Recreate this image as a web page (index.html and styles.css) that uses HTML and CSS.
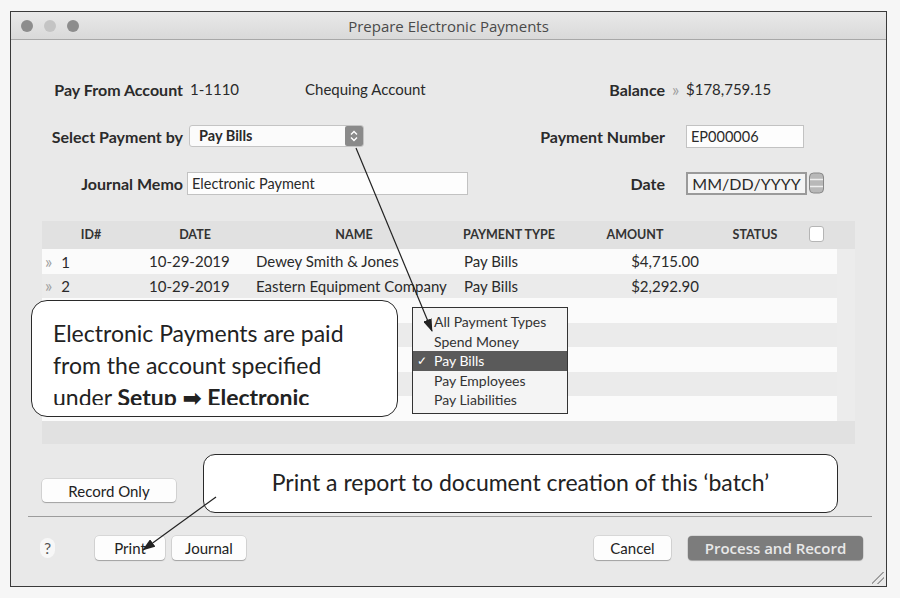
FILE: index.html
```html
<!DOCTYPE html>
<html lang="en">
<head>
    <meta charset="UTF-8">
    <title>Prepare Electronic Payments</title>
    <link rel="stylesheet" href="styles.css">
</head>
<body>
<div class="window">
    <div class="titlebar">
        <div class="lights"><span></span><span class="mid"></span><span></span></div>
        <div class="title">Prepare Electronic Payments</div>
    </div>

    <div class="form">
        <div class="row">
            <div class="lbl">Pay From Account</div>
            <div class="left"><span class="acct">1-1110</span><span>Chequing Account</span></div>
            <div class="lbl">Balance</div>
            <div class="right"><span class="chev">&raquo;</span>$178,759.15</div>
        </div>
        <div class="row">
            <div class="lbl">Select Payment by</div>
            <div class="left">
                <div class="select">Pay Bills
                    <span class="stepper">
                        <svg width="8" height="12" viewBox="0 0 8 12"><path d="M1 4.5 L4 1.5 L7 4.5 M1 7.5 L4 10.5 L7 7.5" fill="none" stroke="#fff" stroke-width="1.4"/></svg>
                    </span>
                </div>
            </div>
            <div class="lbl">Payment Number</div>
            <div class="right"><div class="input num">EP000006</div></div>
        </div>
        <div class="row">
            <div class="lbl">Journal Memo</div>
            <div class="left"><div class="input memo">Electronic Payment</div></div>
            <div class="lbl">Date</div>
            <div class="right">
                <div class="input date-field">MM/DD/YYYY</div>
                <svg class="cal" width="15" height="22" viewBox="0 0 15 22">
                    <rect x="0.5" y="1" width="14" height="20" rx="4" fill="#b8b8b8" stroke="#888"/>
                    <line x1="1" y1="7.5" x2="14" y2="7.5" stroke="#eee" stroke-width="1.5"/>
                    <line x1="1" y1="14.5" x2="14" y2="14.5" stroke="#eee" stroke-width="1.5"/>
                </svg>
            </div>
        </div>
    </div>

    <div class="table">
        <div class="thead">
            <div>ID#</div><div>DATE</div><div>NAME</div><div>PAYMENT TYPE</div><div>AMOUNT</div><div>STATUS</div><div><span class="check"></span></div>
        </div>
        <div class="tbody">
            <div class="rows">
                <div class="tr"><div class="id"><span class="chev">&raquo;</span>1</div><div class="day">10-29-2019</div><div>Dewey Smith &amp; Jones</div><div>Pay Bills</div><div class="amt">$4,715.00</div><div></div><div></div></div>
                <div class="tr"><div class="id"><span class="chev">&raquo;</span>2</div><div class="day">10-29-2019</div><div>Eastern Equipment Company</div><div>Pay Bills</div><div class="amt">$2,292.90</div><div></div><div></div></div>
                <div class="tr"></div>
                <div class="tr"></div>
                <div class="tr"></div>
                <div class="tr"></div>
                <div class="tr"></div>
            </div>
            <div class="scroll"></div>
        </div>
    </div>

    <div class="actions">
        <button class="btn record">Record Only</button>
    </div>
    <div class="sep"></div>
    <div class="footer">
        <span class="help">?</span>
        <button class="btn print">Print</button>
        <button class="btn journal">Journal</button>
        <span class="spacer"></span>
        <button class="btn cancel">Cancel</button>
        <button class="btn process">Process and Record</button>
    </div>

    <div class="grip"></div>

    <!-- callouts laid over the dialog -->
    <div class="callout note-left">
        <div class="note-text">Electronic Payments are paid<br>from the account specified<br>under <b>Setup &#10145; Electronic</b></div>
    </div>
    <div class="menu">
        <div class="item">All Payment Types</div>
        <div class="item">Spend Money</div>
        <div class="item on"><span class="tick">&#10003;</span>Pay Bills</div>
        <div class="item">Pay Employees</div>
        <div class="item">Pay Liabilities</div>
    </div>
    <div class="callout note-print">Print a report to document creation of this &lsquo;batch&rsquo;</div>

    <svg class="arrows" width="900" height="598" viewBox="0 0 900 598">
        <defs>
            <marker id="head" markerWidth="13" markerHeight="9" refX="12" refY="4.5" orient="auto" markerUnits="userSpaceOnUse">
                <path d="M0 0 L13 4.5 L0 9 Z" fill="#222"/>
            </marker>
        </defs>
        <line x1="356" y1="148" x2="432" y2="331" stroke="#222" stroke-width="1.2" marker-end="url(#head)"/>
        <line x1="216" y1="497" x2="143" y2="550" stroke="#222" stroke-width="1.2" marker-end="url(#head)"/>
    </svg>
</div>
</body>
</html>
```

FILE: styles.css
```css
body {
    margin: 0;
    background: #f6f6f6;
    font-family: Lato, "Open Sans", sans-serif;
    color: #2a2a2a;
}
.window {
    position: relative;
    box-sizing: border-box;
    width: 877px;
    height: 576px;
    margin: 11px 0 0 10px;
    border: 1px solid #3a3a3a;
    background: #e9e9e9;
    overflow: hidden;
}
.titlebar {
    position: relative;
    height: 27px;
    border-bottom: 1px solid #a8a8a8;
    background: linear-gradient(#e9e9e9, #d9d9d9);
    display: flex;
    align-items: center;
    justify-content: center;
}
.lights {
    position: absolute;
    left: 10px;
    top: 8px;
    display: flex;
    gap: 11px;
}
.lights span {
    width: 12px;
    height: 12px;
    border-radius: 50%;
    background: #8d8d8d;
}
.lights .mid {
    background: #c4c4c4;
}
.title {
    font-family: "Open Sans", sans-serif;
    font-size: 15px;
    color: #4a4a4a;
}

.form {
    padding-top: 37px;
    display: flex;
    flex-direction: column;
    gap: 23px;
}
.row {
    display: grid;
    grid-template-columns: 176px 283px 195px auto;
    height: 24px;
    align-items: center;
    font-size: 15px;
}
.lbl {
    font-weight: bold;
    font-size: 16px;
    text-align: right;
    padding-right: 4px;
    color: #2b2b2b;
}
.row .lbl:nth-child(3) {
    padding-right: 0;
}
.left {
    display: flex;
    align-items: center;
    height: 24px;
}
.acct {
    width: 115px;
    padding-left: 3px;
}
.right {
    display: flex;
    align-items: center;
    padding-left: 21px;
    height: 24px;
}
.chev {
    color: #a0a0a0;
    font-size: 17px;
}
.right .chev {
    margin-left: -14px;
    width: 14px;
}
.select {
    position: relative;
    box-sizing: border-box;
    width: 175px;
    height: 22px;
    margin-left: 2px;
    padding-left: 9px;
    line-height: 20px;
    background: #fbfbfb;
    border: 1px solid #c4c4c4;
    border-radius: 3px;
    font-weight: bold;
    font-size: 14.5px;
}
.stepper {
    position: absolute;
    right: 0;
    top: 0;
    width: 18px;
    height: 20px;
    background: #8a8a8a;
    border-radius: 2px;
    display: flex;
    align-items: center;
    justify-content: center;
}
.input {
    box-sizing: border-box;
    height: 23px;
    padding-left: 4px;
    line-height: 21px;
    background: #fdfdfd;
    border: 1px solid #c2c2c2;
    font-size: 14.5px;
}
.num {
    width: 118px;
}
.memo {
    width: 281px;
}
.date-field {
    width: 121px;
    border: 2px solid #9a9a9a;
    background: #f4f4f4;
    font-size: 16px;
    line-height: 19px;
    text-align: center;
    padding-left: 0;
}
.cal {
    margin-left: 2px;
}

.table {
    margin: 26px 0 0 31px;
    width: 813px;
    height: 223px;
    background: #e1e1e1;
}
.thead,
.tr {
    display: grid;
    grid-template-columns: 98px 110px 208px 102px 150px 90px 37px;
}
.thead {
    height: 26px;
    grid-template-columns: 98px 110px 208px 102px 150px 90px 55px;
    align-items: center;
    font-size: 12.5px;
    font-weight: bold;
    color: #333;
    text-align: center;
}
.check {
    display: inline-block;
    width: 13px;
    height: 14px;
    margin: 0 23px 0 0;
    background: #fff;
    border: 1px solid #b5b5b5;
    border-radius: 3px;
    vertical-align: middle;
}
.tbody {
    display: flex;
    margin-top: 2px;
}
.rows {
    width: 795px;
}
.scroll {
    flex: 1;
    height: 172px;
    background: #ececec;
}
.tr {
    height: 24.5px;
    align-items: center;
    font-size: 15px;
    background: #fbfbfb;
}
.tr:nth-child(even) {
    background: #ebebeb;
}
.tr .id {
    padding-left: 3px;
}
.tr .id .chev {
    margin-right: 9px;
}
.tr .day {
    padding-left: 9px;
}
.tr .amt {
    text-align: right;
    padding-right: 11px;
}
.tr div:nth-child(3),
.tr div:nth-child(4) {
    padding-left: 6px;
}

.actions {
    padding: 35px 0 0 31px;
}
.btn {
    box-sizing: border-box;
    height: 24px;
    padding: 0;
    background: #fdfdfd;
    border: none;
    border-radius: 4px;
    box-shadow: 0 1px 1px rgba(0, 0, 0, 0.25), 0 0 0 0.5px rgba(0, 0, 0, 0.15);
    font-family: Lato, "Open Sans", sans-serif;
    font-size: 15px;
    color: #222;
}
.record {
    width: 134px;
    height: 23px;
}
.sep {
    margin: 14px 14px 0 17px;
    border-top: 1px solid #9c9c9c;
}
.footer {
    display: flex;
    align-items: center;
    margin-top: 19px;
    padding: 0 23px 0 29px;
}
.help {
    width: 15px;
    height: 20px;
    line-height: 20px;
    text-align: center;
    font-size: 16px;
    color: #555;
    background: #f7f7f7;
    border-radius: 8px;
    margin-right: 40px;
}
.print {
    width: 70px;
}
.journal {
    width: 74px;
    margin-left: 7px;
}
.spacer {
    flex: 1;
}
.cancel {
    width: 77px;
}
.process {
    width: 175px;
    margin-left: 17px;
    background: #7c7c7c;
    color: #e8e8e8;
    font-family: "Open Sans", sans-serif;
    font-weight: 600;
    font-size: 15px;
}
.grip {
    position: absolute;
    right: 2px;
    bottom: 2px;
    width: 12px;
    height: 12px;
    background: linear-gradient(135deg, transparent 45%, #999 46%, #999 52%, transparent 53%, transparent 70%, #999 71%, #999 77%, transparent 78%);
}

.callout {
    position: absolute;
    box-sizing: border-box;
    background: #fff;
    border: 1.5px solid #2a2a2a;
    border-radius: 16px;
    font-family: Lato, "DejaVu Sans", sans-serif;
    font-size: 23px;
    color: #222;
}
.note-left {
    left: 20px;
    top: 288px;
    width: 367px;
    height: 117px;
    padding: 16px 0 0 21px;
}
.note-text {
    height: 88px;
    overflow: hidden;
    line-height: 32px;
    white-space: nowrap;
}
.note-print {
    left: 192px;
    top: 442px;
    width: 635px;
    height: 59px;
    border-radius: 12px;
    text-align: center;
    line-height: 54px;
}
.menu {
    position: absolute;
    left: 401px;
    top: 295px;
    box-sizing: border-box;
    width: 156px;
    height: 107px;
    padding-top: 4px;
    background: #f4f4f4;
    border: 1px solid #333;
    font-size: 14px;
}
.item {
    position: relative;
    height: 19.6px;
    line-height: 19.6px;
    padding-left: 21px;
    color: #333;
}
.item.on {
    background: #5a5a5a;
    color: #fff;
}
.tick {
    position: absolute;
    left: 4px;
    font-size: 12px;
}
.arrows {
    position: absolute;
    left: -11px;
    top: -12px;
    pointer-events: none;
}
```
